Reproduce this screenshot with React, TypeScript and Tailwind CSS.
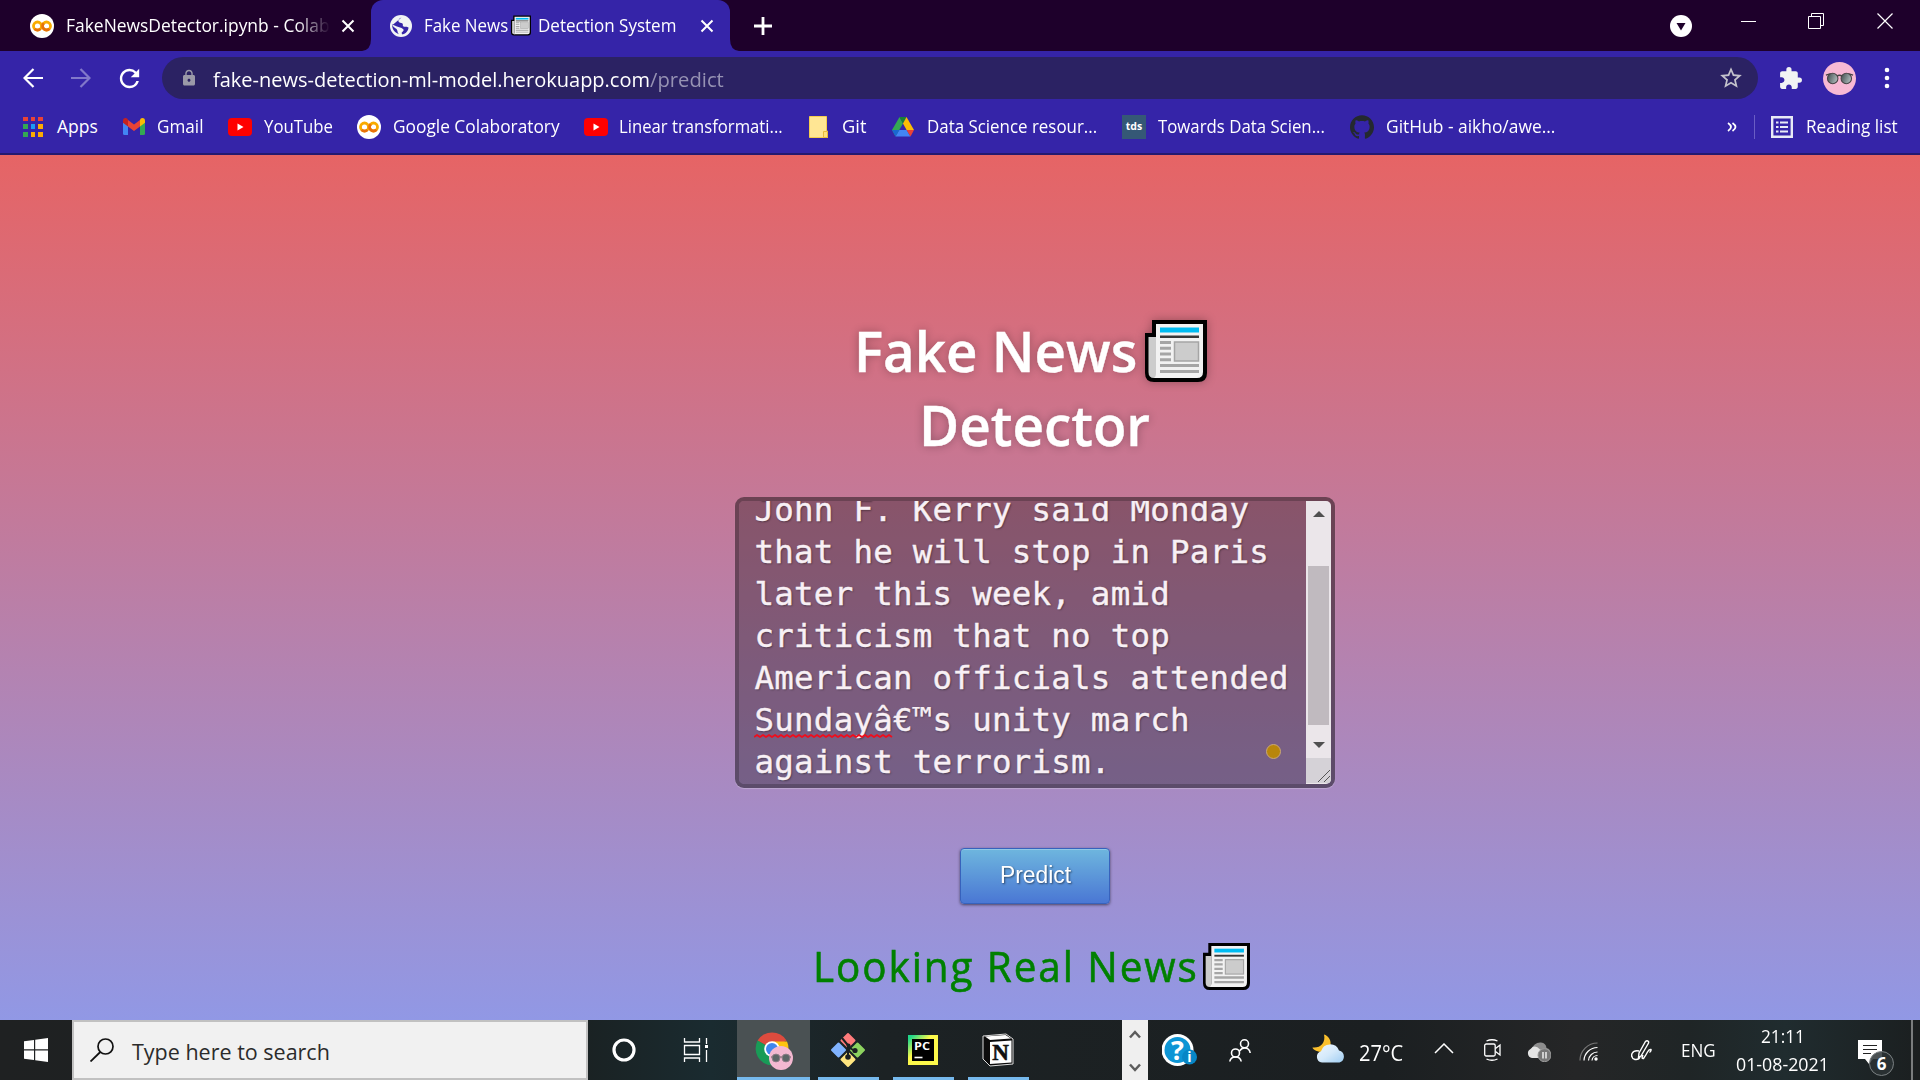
import React, { useLayoutEffect, useRef, useState } from "react";
import { SiGithub } from "react-icons/si";
import { MdExtension, MdStarBorder, MdLock, MdRefresh } from "react-icons/md";

/* A single line of text condensed or widened to an exact width. */
function Fit({ w, className = "", children }: { w: number; className?: string; children: React.ReactNode }) {
  const ref = useRef<HTMLSpanElement>(null);
  const [scale, setScale] = useState(1);
  useLayoutEffect(() => {
    if (ref.current) setScale(w / ref.current.offsetWidth);
  }, [w]);
  return (
    <span className={`block shrink-0 ${className}`} style={{ width: w }}>
      <span ref={ref} className="inline-block origin-left whitespace-pre align-top" style={{ transform: `scaleX(${scale})` }}>
        {children}
      </span>
    </span>
  );
}

function Newspaper({ className = "" }: { className?: string }) {
  return (
    <svg viewBox="0 0 62 62" className={`block shrink-0 ${className}`}>
      <path d="M7 0H62V53Q62 62 53 62H9Q0 62 0 53V13H7Z" fill="#000" />
      <path d="M3.5 17H11V58H9Q3.5 58 3.5 52Z" fill="#ccc" />
      <path d="M11 4H58V52Q58 58 52 58H9Q11 57 11 53Z" fill="#f2f2f2" />
      <path d="M15 7.5H54V12.500H15Z" fill="#00bcf2" />
      <path d="M15 15.500H54V18H15Z" fill="#383838" />
      <path d="M15 21H26V24H15ZM15 26.800H26V29.800H15ZM15 32.500H26V35.500H15ZM15 38.300H26V41.300H15ZM15 44H54V47H15ZM15 50H54V53H15Z" fill="#a5a5a5" />
      <rect x="29.500" y="22" width="24" height="19" fill="#ccc" stroke="#a5a5a5" strokeWidth="1.500" />
    </svg>
  );
}

function Colab() {
  return (
    <svg viewBox="0 0 24 24" className="block size-6 shrink-0">
      <circle cx="12" cy="12" r="12" fill="#fff" />
      <circle cx="7.500" cy="12" r="4" fill="none" stroke="#f9ab00" strokeWidth="2.800" />
      <circle cx="16.500" cy="12" r="4" fill="none" stroke="#f9ab00" strokeWidth="2.800" />
      <path d="M4.600 14.900A4 4 0 0 0 10.400 14.900M13.700 9.200A4 4 0 0 0 13.700 14.800A4 4 0 0 0 19.400 14.800" fill="none" stroke="#e8710a" strokeWidth="2.800" />
    </svg>
  );
}

function YouTube({ className = "" }: { className?: string }) {
  return (
    <svg viewBox="0 0 24 18" className={`block h-[18px] w-6 shrink-0 ${className}`}>
      <rect width="24" height="18" rx="4" fill="#f00" />
      <path d="M9.500 5.500V12.500L15.500 9Z" fill="#fff" />
    </svg>
  );
}

function AppsGrid() {
  const colors = ["bg-[#ea4335]", "bg-[#ea4335]", "bg-[#ea4335]", "bg-[#34a853]", "bg-[#1a9bf5]", "bg-[#fbab04]", "bg-[#34a853]", "bg-[#fbab04]", "bg-[#fbab04]"];
  return (
    <div className="ml-[23px] grid h-5 w-5 shrink-0 grid-cols-3 gap-[3px]">
      {colors.map((c, i) => (
        <span key={i} className={c} />
      ))}
    </div>
  );
}

function Close({ className = "" }: { className?: string }) {
  return (
    <svg viewBox="0 0 14 14" className={`block size-3.5 shrink-0 ${className}`}>
      <path d="M1.500 1.500L12.500 12.500M12.500 1.500L1.500 12.500" stroke="#fff" strokeWidth="2" />
    </svg>
  );
}

function Sunglasses({ className = "" }: { className?: string }) {
  return (
    <svg viewBox="0 0 34 34" className={`block shrink-0 ${className}`}>
      <defs>
        <linearGradient id="lens" x1="0" y1="0" x2="1" y2="0.400">
          <stop offset="0" stopColor="#3d4a4b" />
          <stop offset="1" stopColor="#a9b5b6" />
        </linearGradient>
      </defs>
      <circle cx="17" cy="17" r="17" fill="#f8b9d4" />
      <path d="M3 13.500L8 12M31 13.500L26 12M14 15Q17 12.500 20 15" stroke="#444" strokeWidth="1.500" fill="none" />
      <circle cx="10" cy="17" r="5.400" fill="url(#lens)" stroke="#4a4547" strokeWidth="1.100" />
      <circle cx="24" cy="17" r="5.400" fill="url(#lens)" stroke="#4a4547" strokeWidth="1.100" />
    </svg>
  );
}

function TabStrip() {
  return (
    <div className="flex h-[51px] items-center bg-[#1e002b] text-[17.500px] leading-6">
      <div className="flex w-[362px] shrink-0 items-center">
        <div className="ml-[30px]"><Colab /></div>
        <div className="mb-px ml-3 w-[264px] overflow-hidden [mask-image:linear-gradient(to_right,black_230px,transparent_264px)]">
          <Fit w={264}>FakeNewsDetector.ipynb - Colab</Fit>
        </div>
        <Close className="ml-[11px]" />
      </div>
      <svg viewBox="0 0 9 51" className="block h-[51px] w-[9px] shrink-0"><path d="M0 51Q9 50 9 39V51Z" fill="#3524a8" /></svg>
      <div className="flex h-[51px] w-[359px] shrink-0 items-center rounded-t-[12px] bg-[#3524a8]">
        <svg viewBox="0 0 22 22" className="ml-[19px] block size-[22px] shrink-0">
          <circle cx="11" cy="11" r="11" fill="#f1f3f4" />
          <path d="M11.500 2.500C9 3.500 8 5 8.500 6.500C9 8 11 7.800 12.500 8.500C13.500 9.500 12 10.500 13.500 11.500C15 12 17 11 18.500 12.500C18.500 15.500 16 18.500 12.500 19.500L11.500 18C13 16 14.500 15.500 13 14C11 12.500 9 12.500 7 11.500L2.200 9.500C2 13.500 4 17 7.500 18.500L9 19.200C7 17.500 8 15.500 6.500 14C4.500 12.500 2.500 11.500 2.500 10" fill="#3524a8" />
        </svg>
        <Fit w={84} className="mb-px ml-[12px]">Fake News</Fit>
        <Newspaper className="ml-[3px] h-[21px] w-5" />
        <Fit w={138} className="mb-px ml-[7px]">Detection System</Fit>
        <Close className="ml-[24px]" />
      </div>
      <svg viewBox="0 0 9 51" className="block h-[51px] w-[9px] shrink-0"><path d="M9 51Q0 50 0 39V51Z" fill="#3524a8" /></svg>
      <svg viewBox="0 0 18 18" className="ml-[15px] block size-[18px] shrink-0"><path d="M9 0V18M0 9H18" stroke="#fff" strokeWidth="2.800" /></svg>
      <svg viewBox="0 0 22 22" className="ml-[898px] block size-[22px] shrink-0">
        <circle cx="11" cy="11" r="11" fill="#fff" />
        <path d="M6.500 8H15.500L11 15.500Z" fill="#1e002b" />
      </svg>
      <div className="mb-[9px] flex items-center">
        <div className="ml-[49px] h-px w-[15px] bg-white" />
        <svg viewBox="0 0 16 16" className="ml-[52px] block size-4"><path d="M0.500 3.500H12.500V15.500H0.500ZM3.500 3.500V0.500H15.500V12.500H12.500" fill="none" stroke="#fff" /></svg>
        <svg viewBox="0 0 16 16" className="ml-[53px] block size-4"><path d="M0.500 0.500L15.500 15.500M15.500 0.500L0.500 15.500" stroke="#fff" strokeWidth="1.200" /></svg>
      </div>
    </div>
  );
}

function Toolbar() {
  return (
    <div className="flex h-[54px] items-center bg-[#3524a8]">
      <svg viewBox="0 0 20 20" className="ml-[23px] block size-5 shrink-0"><path d="M20 10H2M10.500 1L1.500 10L10.500 19" fill="none" stroke="#fff" strokeWidth="2.200" /></svg>
      <svg viewBox="0 0 20 20" className="ml-7 block size-5 shrink-0"><path d="M0 10H18M9.500 1L18.500 10L9.500 19" fill="none" stroke="#8278ca" strokeWidth="2.200" /></svg>
      <MdRefresh className="ml-[24px] size-[29px] shrink-0 text-white" />
      <div className="ml-[18px] flex h-[42px] w-[1596px] shrink-0 items-center rounded-full bg-[#2b2263] text-[20.500px] leading-[26px]">
        <MdLock className="ml-[18px] size-[18px] shrink-0 text-[#9b99a8]" />
        <Fit w={437} className="ml-[15px] mt-px text-white">fake-news-detection-ml-model.herokuapp.com</Fit>
        <Fit w={74} className="mt-px text-[#9692b3]">/predict</Fit>
        <MdStarBorder className="ml-[994px] size-[26px] shrink-0 text-[#c4c3cc]" />
      </div>
      <MdExtension className="ml-[20px] size-[25px] shrink-0 text-[#f1f3f4]" />
      <Sunglasses className="ml-[20px] size-[33px]" />
      <svg viewBox="0 0 6 22" className="ml-[28px] block h-[22px] w-[6px] shrink-0">
        <circle cx="3" cy="3" r="2.300" fill="#fff" /><circle cx="3" cy="11" r="2.300" fill="#fff" /><circle cx="3" cy="19" r="2.300" fill="#fff" />
      </svg>
    </div>
  );
}

function Bookmarks() {
  return (
    <div className="flex h-[50px] items-center border-b-2 border-[#25196f] bg-[#3524a8] pb-[5px] text-[17.500px] leading-6">
      <AppsGrid />
      <Fit w={41} className="mb-px ml-[14px]">Apps</Fit>
      <svg viewBox="0 0 22 17" className="ml-[25px] block h-[17px] w-[22px] shrink-0">
        <path d="M0 3V15.500Q0 17 1.500 17H5V7Z" fill="#4285f4" />
        <path d="M22 3V15.500Q22 17 20.500 17H17V7Z" fill="#34a853" />
        <path d="M17 2V8.500L22 4.700V2.500C22 0 19 -0.600 17.600 0.700Z" fill="#fbbc04" />
        <path d="M5 8.500V2L11 6.500L17 2V8.500L11 13Z" fill="#ea4335" />
        <path d="M0 2.500V4.700L5 8.500V2L4.400 0.700C2.800 -0.600 0 0 0 2.500Z" fill="#c5221f" />
      </svg>
      <Fit w={46} className="mb-px ml-[12px]">Gmail</Fit>
      <YouTube className="ml-[25px]" />
      <Fit w={69} className="mb-px ml-[12px]">YouTube</Fit>
      <div className="ml-[24px]"><Colab /></div>
      <Fit w={167} className="mb-px ml-[12px]">Google Colaboratory</Fit>
      <YouTube className="ml-[24px]" />
      <Fit w={164} className="mb-px ml-[11px]">Linear transformati...</Fit>
      <svg viewBox="0 0 19 22" className="ml-[26px] block h-[22px] w-[19px] shrink-0">
        <path d="M0.500 0.500H17.500V15H18.500V21.500H0.500Z" fill="#ffe694" stroke="#f5cd4e" />
        <path d="M14.500 21.500V15.500H18.500V21.500Z" fill="#ffe07a" stroke="#e8bb3a" />
      </svg>
      <Fit w={24} className="mb-px ml-[14px]">Git</Fit>
      <svg viewBox="0 0 22 20" className="ml-[26px] block h-5 w-[22px] shrink-0">
        <path d="M7.500 0L0 13L3.500 19.500L11 6.500Z" fill="#34a853" />
        <path d="M7.500 0H14.500L11 6.500Z" fill="#188038" />
        <path d="M14.500 0L22 13H14.600L11 6.500Z" fill="#fbbc04" />
        <path d="M7.300 13H14.600L18.500 19.500H3.500Z" fill="#4285f4" />
        <path d="M0 13H7.300L3.500 19.500Z" fill="#1967d2" /><path d="M14.600 13H22L18.500 19.500Z" fill="#ea4335" />
      </svg>
      <Fit w={170} className="mb-px ml-[13px]">Data Science resour...</Fit>
      <div className="ml-[25px] flex size-6 shrink-0 items-center justify-center bg-[#355876] pb-px text-[10.500px] font-bold leading-3 text-white">tds</div>
      <Fit w={167} className="mb-px ml-[12px]">Towards Data Scien...</Fit>
      <SiGithub className="ml-[25px] size-6 shrink-0 text-[#24292f]" />
      <Fit w={169} className="mb-px ml-[12px]">GitHub - aikho/awe...</Fit>
      <svg viewBox="0 0 10 10" className="ml-[172px] block size-2.5 shrink-0"><path d="M1 1Q4 3 4 5Q4 7 1 9M5.500 1Q8.500 3 8.500 5Q8.500 7 5.500 9" fill="none" stroke="#fff" strokeWidth="1.800" /></svg>
      <div className="ml-[17px] h-6 w-px shrink-0 bg-[#6a5dc4]" />
      <svg viewBox="0 0 22 22" className="ml-[16px] block size-[22px] shrink-0">
        <path d="M1.200 1.200H20.800V20.800H1.200Z" fill="none" stroke="#e8eaf6" strokeWidth="2.400" />
        <path d="M5 6.500H7.500M5 11H7.500M5 15.500H7.500M9 6.500H17M9 11H17M9 15.500H17" stroke="#e8eaf6" strokeWidth="2.200" />
      </svg>
      <Fit w={92} className="mb-px ml-[13px]">Reading list</Fit>
    </div>
  );
}

const article = [
  "John F. Kerry said Monday",
  "that he will stop in Paris",
  "later this week, amid",
  "criticism that no top",
  "American officials attended",
  "Sundayâ€™s unity march",
  "against terrorism.",
];

function Page() {
  return (
    <main className="h-[865px] bg-[linear-gradient(#e66465,#9198e5)] pt-[158px]">
      <div className="ml-[735px] flex w-[600px] flex-col">
        <h1 className="text-[56px] font-semibold leading-[74px] text-white [-webkit-text-stroke:0.4px_white] [text-shadow:0_0_10px_rgba(0,0,0,0.3)]">
          <div className="flex h-[74px] items-start">
            <Fit w={283} className="ml-[119px]">Fake News</Fit>
            <Newspaper className="ml-[8px] mt-[7px] size-[62px] drop-shadow-[0_0_5px_rgba(0,0,0,0.3)]" />
          </div>
          <Fit w={231} className="ml-[184px] h-[74px]">Detector</Fit>
        </h1>
        <div className="relative mt-9 flex h-[291px] w-[600px] justify-between overflow-hidden rounded-[9px] border-4 border-black/45 bg-black/30 bg-clip-padding shadow-[0_1px_1px_rgba(255,255,255,0.25)]">
          <div className="-mt-3 ml-[15.500px] font-['DejaVu_Sans_Mono',monospace] text-[32.500px] leading-[42px] tracking-[0.220px] text-[#f8f0f5] [-webkit-text-stroke:0.4px_#f8f0f5] [text-shadow:1px_1px_2px_rgba(0,0,0,0.4)]">
            {article.map((line) => (
              <div key={line} className="h-[42px] whitespace-pre">{line}</div>
            ))}
          </div>
          <svg viewBox="0 0 139 4" className="absolute left-[15px] top-[233px] h-1 w-[139px]">
            <path d={"M0 3" + Array.from({ length: 23 }, () => "l3 -2l3 2").join("")} fill="none" stroke="#f00d1c" strokeWidth="1.800" />
          </svg>
          <div className="absolute left-[527px] top-[243px] size-[15px] rounded-full border border-[#c9a878] bg-[#b8860b]" />
          <div className="flex w-[25px] flex-col items-center bg-[#ebe6ea]">
            <svg viewBox="0 0 12 6" className="mt-[10px] block h-1.5 w-3 shrink-0"><path d="M6 0L12 6H0Z" fill="#505050" /></svg>
            <div className="mt-[49px] h-[159px] w-[21px] shrink-0 bg-[#c0babf]" />
            <svg viewBox="0 0 12 6" className="mt-[17px] block h-1.5 w-3 shrink-0"><path d="M6 6L0 0H12Z" fill="#505050" /></svg>
            <div className="mt-[10px] flex h-[25px] w-[25px] items-end justify-end bg-[#d5d2d7] pb-px pr-px">
              <svg viewBox="0 0 12 12" className="size-3"><path d="M0 12L12 0M6 12L12 6" stroke="#555" /></svg>
            </div>
          </div>
        </div>
        <button className="ml-[225px] mt-[60px] flex h-14 w-[150px] items-start justify-center rounded-[4px] border border-[#3762bc] bg-[linear-gradient(#6eb6de,#4a77d4)] pt-[12px] font-['Liberation_Sans',sans-serif] text-[23.500px] leading-[28px] text-white shadow-[inset_0_1px_0_rgba(255,255,255,0.25),0_1px_3px_rgba(0,0,0,0.55)] [text-shadow:1px_1px_2px_rgba(0,0,0,0.5)]">
          <Fit w={71}>Predict</Fit>
        </button>
        <div className="mt-[33px] flex items-start text-[42px] leading-[57px] tracking-[2px] text-[#008000]">
          <Fit w={386} className="ml-[78px] [-webkit-text-stroke:0.6px_#008000]">Looking Real News</Fit>
          <Newspaper className="ml-[4px] mt-[6px] size-[47px]" />
        </div>
      </div>
    </main>
  );
}

function GitIcon() {
  return (
    <svg viewBox="0 0 36 36" className="block size-9">
      <rect x="12.400" y="2.900" width="11.200" height="11.200" rx="1" transform="rotate(45 18 8.500)" fill="#ff7b7b" />
      <rect x="2.900" y="12.400" width="11.200" height="11.200" rx="1" transform="rotate(45 8.500 18)" fill="#80b3ff" />
      <rect x="21.900" y="12.400" width="11.200" height="11.200" rx="1" transform="rotate(45 27.500 18)" fill="#8dd35f" />
      <rect x="12.400" y="21.900" width="11.200" height="11.200" rx="1" transform="rotate(45 18 27.500)" fill="#ffe680" />
      <path d="M12 6L19 14.500M18 14V25M18 15L25 19" stroke="#1b2022" strokeWidth="2" />
      <circle cx="18.500" cy="13.500" r="2" fill="#1b2022" /><circle cx="18" cy="25" r="2.800" fill="#1b2022" /><circle cx="25" cy="18.500" r="2.600" fill="#1b2022" />
    </svg>
  );
}

function RunningApp({ children, className = "" }: { children: React.ReactNode; className?: string }) {
  return (
    <div className={`flex h-[60px] w-[61px] shrink-0 items-center justify-center border-b-[3px] border-[#76b9ed] pr-0.5 pt-[3px] ${className}`}>{children}</div>
  );
}

function Taskbar() {
  return (
    <footer className="flex h-[60px] items-center bg-[linear-gradient(to_right,#1f2122_0%,#1a2122_30%,#1a2b30_37%,#1c2224_46%,#1b1f21_72%,#252627_82%,#1f2526_88%,#202c2f_93%,#1b1f20_100%)] text-white">
      <svg viewBox="0 0 24 24" className="ml-6 block size-6 shrink-0"><path d="M0 3.200L10 1.900V11.300H0ZM11.200 1.700L24 0V11.300H11.200ZM0 12.500H10V22L0 20.800ZM11.200 12.500H24V24L11.200 22.200Z" fill="#fff" /></svg>
      <div className="ml-6 flex h-[60px] w-[516px] shrink-0 items-center border-2 border-[#c1c1c1] bg-[#f1f1f1] text-[21.500px] leading-[30px] text-[#2b2b2b]">
        <svg viewBox="0 0 24 24" className="ml-4 block size-6"><circle cx="15.500" cy="8.500" r="7.500" fill="none" stroke="#111" strokeWidth="1.700" /><path d="M10.300 14L0.500 23.500" stroke="#111" strokeWidth="1.800" /></svg>
        <Fit w={198} className="ml-[18px] mt-[4px]">Type here to search</Fit>
      </div>
      <svg viewBox="0 0 24 24" className="ml-6 block size-6 shrink-0"><circle cx="12" cy="12" r="10" fill="none" stroke="#fff" strokeWidth="3.200" /></svg>
      <svg viewBox="0 0 26 24" className="ml-[47px] block h-6 w-[26px] shrink-0">
        <path d="M1.500 0V4H16.500V0M1.500 24V20H16.500V24M1.500 7.500H16.500V16.500H1.500ZM23.500 0V6M23.500 12V24" fill="none" stroke="#fff" strokeWidth="1.300" /><path d="M22 7H25V10H22Z" fill="#fff" />
      </svg>
      <div className="ml-[28px] flex h-[60px] w-[73px] shrink-0 items-center justify-center border-b-[3px] border-[#76b9ed] bg-[#4a5153] pt-[5px]">
        <svg viewBox="0 0 38 38" className="block size-[38px]">
          <path d="M17 17L2.600 8.500A17 17 0 0 1 31.500 8.500Z" fill="#dd4b3e" />
          <path d="M17 17L2.600 8.500A17 17 0 0 0 17 33.500L22 20Z" fill="#199b57" />
          <path d="M17 9.500H32A17 17 0 0 1 17 33.500L24 17Z" fill="#fdc40f" />
          <circle cx="17" cy="17" r="7.800" fill="#fff" /><circle cx="17" cy="17" r="6" fill="#3f86ee" />
          <circle cx="26" cy="26" r="12" fill="#f4b8d1" />
          <path d="M16 25H36" stroke="#66565e" />
          <circle cx="21" cy="26" r="3.900" fill="#5d6667" stroke="#8e7d86" /><circle cx="31" cy="26" r="3.900" fill="#5d6667" stroke="#8e7d86" />
        </svg>
      </div>
      <RunningApp className="ml-2"><GitIcon /></RunningApp>
      <RunningApp className="ml-[14px]">
        <div className="size-[30px] bg-[linear-gradient(135deg,#21d789_8%,#fcf84a_40%)] p-[4px]">
          <svg viewBox="0 0 22 22" className="block size-[22px] bg-black">
            <text x="2" y="11" fontFamily="Open Sans, sans-serif" fontWeight="bold" fontSize="11" textLength="16" lengthAdjust="spacingAndGlyphs" fill="#fff">PC</text>
            <path d="M2.500 18.500H10.500" stroke="#fff" strokeWidth="1.600" />
          </svg>
        </div>
      </RunningApp>
      <RunningApp className="ml-[14px]">
        <svg viewBox="0 0 32 34" className="block h-[34px] w-8">
          <path d="M1 3L24 1L31 6V31L8 33L1 26Z" fill="#0c0c0c" stroke="#ddd" strokeWidth="1" strokeLinejoin="round" />
          <path d="M3 3.500L23.500 2L29 5.500L8 7Z" fill="#fff" />
          <path d="M8 9L29.500 7.500V29.500L8 31Z" fill="#fff" />
          <text x="10.300" y="27" fontFamily="Liberation Serif, serif" fontWeight="bold" fontSize="23" fill="#111" stroke="#111" strokeWidth="0.600">N</text>
        </svg>
      </RunningApp>
      <div className="ml-[93px] flex h-[60px] w-[26px] shrink-0 flex-col items-center justify-between bg-[#efefef] pb-[8px] pt-[10px]">
        <svg viewBox="0 0 12 9" className="h-[9px] w-3"><path d="M1 7.500L6 2L11 7.500" fill="none" stroke="#5c5c5c" strokeWidth="2.500" /></svg>
        <svg viewBox="0 0 12 9" className="h-[9px] w-3"><path d="M1 1.500L6 7L11 1.500" fill="none" stroke="#5c5c5c" strokeWidth="2.500" /></svg>
      </div>
      <svg viewBox="0 0 36 32" className="ml-[14px] block h-8 w-9 shrink-0">
        <circle cx="15.500" cy="16" r="16" fill="#fff" /><circle cx="15.500" cy="16" r="13" fill="#0d95d5" />
        <text x="15.500" y="25.500" textAnchor="middle" fontFamily="Open Sans, sans-serif" fontWeight="bold" fontSize="27" fill="#fff">?</text>
        <circle cx="27.500" cy="23" r="7.500" fill="#0786c6" />
        <text x="27.500" y="28" textAnchor="middle" fontFamily="Open Sans, sans-serif" fontWeight="bold" fontSize="14" fill="#fff">i</text>
      </svg>
      <svg viewBox="0 0 22 23" className="ml-[31px] block h-[23px] w-[22px] shrink-0" fill="none" stroke="#fff" strokeWidth="1.600">
        <circle cx="15.500" cy="4.800" r="4" /><circle cx="6.500" cy="14" r="4" /><path d="M0.800 22.500Q1.500 18 6.500 18Q11.500 18 12.200 22.500M10.500 12Q12.500 9 15.500 9Q20.500 9 21.200 14" />
      </svg>
      <svg viewBox="0 0 34 29" className="mb-1 ml-[61px] block h-[29px] w-[34px] shrink-0">
        <defs><linearGradient id="cloud" x1="0" y1="0" x2="1" y2="1"><stop offset="0" stopColor="#eff7ff" /><stop offset="0.500" stopColor="#d4e9fa" /><stop offset="1" stopColor="#9fcdf2" /></linearGradient></defs>
        <path d="M12 0.500C21 3 21 17 11 18C6 18 1 16 0.500 13.500C8 14.500 14 9 12 0.500Z" fill="#fbc02d" />
        <path d="M10 28.500A5.800 5.800 0 0 1 9 17.200A9.500 9.500 0 0 1 27 16.500A6.200 6.200 0 0 1 27.500 28.500Z" fill="url(#cloud)" />
      </svg>
      <Fit w={44} className="ml-[13px] mt-[5px] text-[21px] leading-7">27°C</Fit>
      <svg viewBox="0 0 20 11" className="mb-1 ml-[31px] block h-[11px] w-5 shrink-0"><path d="M1 10L10 1L19 10" fill="none" stroke="#fff" strokeWidth="1.500" /></svg>
      <svg viewBox="0 0 17 22" className="ml-[30px] block h-[22px] w-[17px] shrink-0" fill="none" stroke="#fff" strokeWidth="1.300">
        <rect x="0.700" y="5" width="10.500" height="12" rx="1.500" /><path d="M11.500 9.500L16 6V16L11.500 12.500M2.500 2Q8 -0.500 13.500 2M2.500 20Q8 22.500 13.500 20" />
      </svg>
      <svg viewBox="0 0 24 20" className="ml-[26px] mt-[3px] block h-5 w-6 shrink-0">
        <path d="M4 8Q7 0 14 0.500Q19 1 19.500 6Q24 7 23.500 12L10 14Z" fill="#8d8d8d" />
        <path d="M5 16A4.800 4.800 0 0 1 3.500 7Q8 2 13 7.500L18 9L12 16Z" fill="#e4e4e4" />
        <circle cx="17.500" cy="13.200" r="6.500" fill="#777" stroke="#999" /><path d="M16 10V16.500M19 10V16.500" stroke="#fff" strokeWidth="1.300" />
      </svg>
      <svg viewBox="0 0 19 19" className="ml-[28px] mt-[3px] block size-[19px] shrink-0" fill="none">
        <path d="M1 18.500A17.500 17.500 0 0 1 18.500 1" stroke="#777" strokeWidth="1.200" /><path d="M5 18.500A13.500 13.500 0 0 1 18.500 5.500M9.500 18.500A9 9 0 0 1 18.500 10M13 18.500A5.500 5.500 0 0 1 18.500 13.500" stroke="#fff" strokeWidth="1.200" /><circle cx="17" cy="17" r="1.700" fill="#fff" />
      </svg>
      <svg viewBox="0 0 21 21" className="ml-[33px] block size-[21px] shrink-0" fill="none" stroke="#fff" strokeWidth="1.400">
        <path d="M8 13L14.500 1.500Q16 0 17.500 1.500Q18 2.500 17 4L10 16L7.500 17.500ZM8 11Q3 10 1 13.500Q-0.500 18 4 19.500Q8 20 9 17M12 15Q10 19 12.500 18.500Q15 15 16.500 12Q18 9 20 9.500Q20.500 11 18.500 12.500" />
      </svg>
      <Fit w={35} className="ml-[29px] text-[18px] leading-6">ENG</Fit>
      <div className="ml-[20px] flex w-[93px] shrink-0 flex-col items-center text-[18px] leading-7">
        <Fit w={44}>21:11</Fit>
        <Fit w={93}>01-08-2021</Fit>
      </div>
      <svg viewBox="0 0 38 38" className="ml-[28px] mt-[15px] block size-[38px] shrink-0">
        <path d="M1 1H25V20H16L12 25L8 20H1Z" fill="#fff" />
        <path d="M6 6.500H20M6 10.500H20M6 14.500H14" stroke="#222" strokeWidth="1.200" />
        <circle cx="24.500" cy="24.500" r="12" fill="#2b3335" fillOpacity="0.850" stroke="#7b8183" />
        <text x="24.500" y="30.500" textAnchor="middle" fontFamily="Open Sans, sans-serif" fontWeight="bold" fontSize="17" fill="#fff">6</text>
      </svg>
      <div className="ml-[16px] h-[60px] w-[2px] bg-[#7a7d7e]" />
    </footer>
  );
}

export default function App() {
  return (
    <div className="flex h-[1080px] w-[1920px] flex-col overflow-hidden font-['Open_Sans','Noto_Sans',sans-serif] text-white">
      <TabStrip />
      <Toolbar />
      <Bookmarks />
      <Page />
      <Taskbar />
    </div>
  );
}
